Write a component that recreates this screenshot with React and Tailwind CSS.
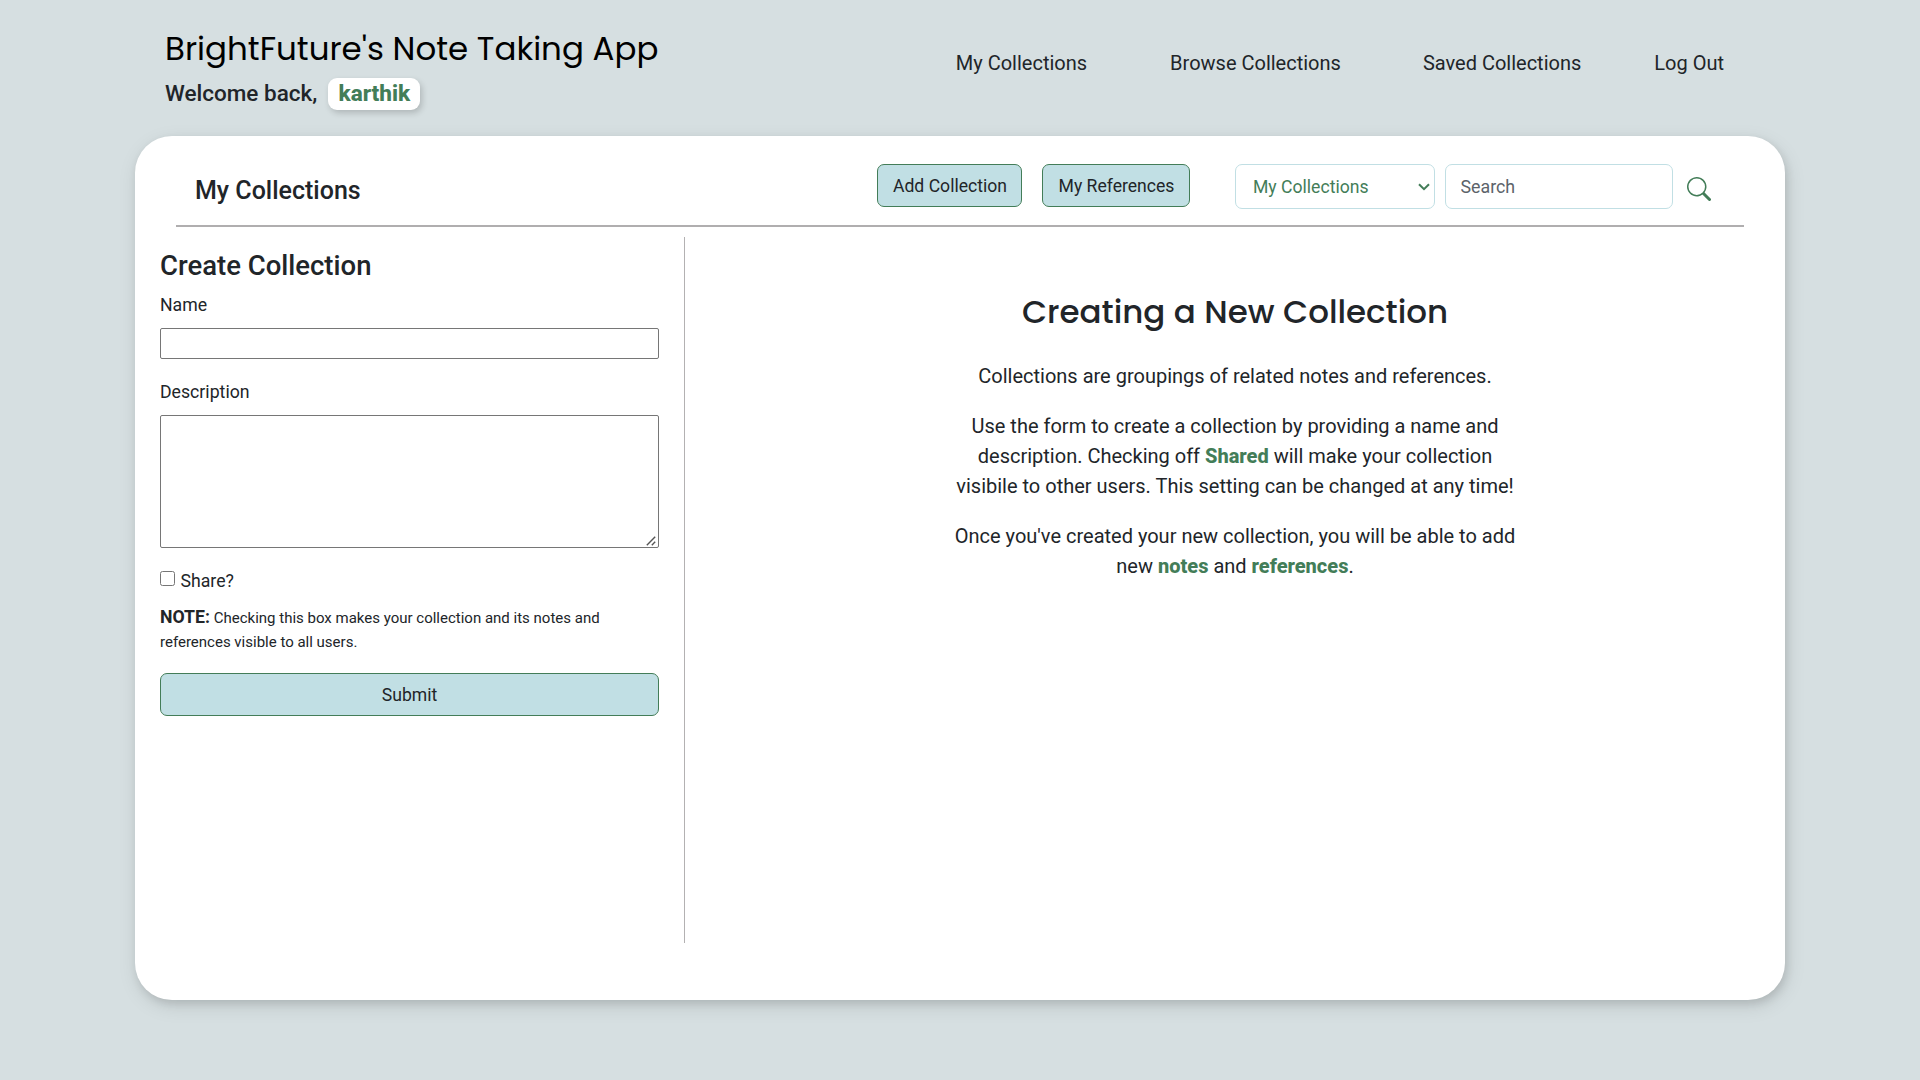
import { BsSearch } from 'react-icons/bs';

function Header() {
  return (
    <header className="flex h-[136px] items-start justify-between pl-[165px] pr-[196px]">
      <div className="pt-[29px]">
        <h1 className="font-['Poppins','Inter',sans-serif] text-[32.5px] leading-10 text-black">
          BrightFuture's Note Taking App
        </h1>
        <div className="mt-[9px] flex items-center text-[22.5px] leading-8">
          <span className="pb-0.5 font-medium leading-[30px]">Welcome back,</span>
          <span className="ml-[11px] flex h-8 w-[92px] items-center justify-center rounded-[9px] bg-white pb-0.5 font-extrabold text-[#437d58] shadow-[2px_3px_6px_rgba(0,0,0,0.18)]">
            karthik
          </span>
        </div>
      </div>
      <nav className="flex gap-[83px] pt-12 text-xl leading-[30px]">
        <a>My Collections</a>
        <a>Browse Collections</a>
        <a className="-ml-px">Saved Collections</a>
        <a className="-ml-2.5">Log Out</a>
      </nav>
    </header>
  );
}

function Toolbar() {
  return (
    <div className="mx-[41px] flex h-[91px] items-start border-b-2 border-[#b0aeaf] pl-[19px] pr-[33px] pt-7">
      <h2 className="mr-auto mt-2.5 text-[25px] font-medium leading-[34px]">My Collections</h2>
      <button className="h-[43px] w-[145px] rounded-[7px] border border-[#437d58] bg-[#c1dfe4] pl-px pt-0.5 text-[17.6px] leading-none">
        Add Collection
      </button>
      <button className="ml-5 h-[43px] w-[148px] rounded-[7px] border border-[#437d58] bg-[#c1dfe4] pl-px pt-0.5 text-[17.6px] leading-none">
        My References
      </button>
      <div className="relative ml-[45px]">
        <select className="block h-[45px] w-[200px] appearance-none rounded-[7px] border border-[#c1dfe4] bg-white pl-[17px] pt-0.5 text-[17.6px] text-[#437d58]">
          <option>My Collections</option>
        </select>
        <svg
          className="pointer-events-none absolute right-[4px] top-[18px] h-2.5 w-3.5 text-[#437d58]"
          viewBox="0 0 14 10"
          fill="none"
          stroke="currentColor"
          strokeWidth="2"
        >
          <path d="M2 2.2 7 7.2 12 2.2" />
        </svg>
      </div>
      <input
        placeholder="Search"
        className="ml-2.5 h-[45px] w-[228px] rounded-[7px] border border-[#c1dfe4] bg-white pl-[14.5px] text-[17.8px] placeholder:text-[#5c636a]"
      />
      <BsSearch className="ml-3.5 mt-[13px] size-6 text-[#437d58]" />
    </div>
  );
}

function CollectionForm() {
  return (
    <form className="flex w-[550px] flex-col border-r border-[#b3b1b2] px-[25px] pt-3 text-[17.7px] leading-[29px]">
      <h2 className="pb-2 text-[27.5px] font-medium leading-[34px]">Create Collection</h2>
      <label>Name</label>
      <input className="mt-2 h-[31px] w-full rounded-xs border border-[#767676]" />
      <label className="mt-[19px]">Description</label>
      <div className="relative mt-2 h-[133px]">
        <textarea className="block size-full resize-none rounded-xs border border-[#767676]" />
        <svg
          className="pointer-events-none absolute bottom-0.5 right-[3px] size-2.5 text-[#555]"
          viewBox="0 0 10 10"
          fill="none"
          stroke="currentColor"
          strokeWidth="1.4"
        >
          <path d="M0.8 9.2 9.2 0.8M5.8 9.2 9.2 5.8" />
        </svg>
      </div>
      <label className="mt-[19px] flex items-center gap-[5.5px]">
        <input type="checkbox" className="mb-1.5 size-[15px]" />
        Share?
      </label>
      <p className="mt-[9px] text-[15px] leading-6">
        <strong className="text-[17.7px] leading-6">NOTE:</strong> Checking this box makes your collection and its notes
        and references visible to all users.
      </p>
      <button
        type="button"
        className="mt-[19px] h-[43px] rounded-[7px] border border-[#437d58] bg-[#c1dfe4] pt-0.5 text-[17.6px] leading-none"
      >
        Submit
      </button>
    </form>
  );
}

function Term({ children }) {
  return <strong className="font-extrabold text-[#437d58]">{children}</strong>;
}

function Guide() {
  return (
    <section className="flex flex-1 flex-col items-center pt-[55px] text-center text-xl leading-[30px]">
      <h2 className="mb-[29px] font-['Poppins','Inter',sans-serif] text-[32.5px] font-medium leading-10">
        Creating a New Collection
      </h2>
      <div className="flex w-[566px] flex-col gap-5">
        <p>Collections are groupings of related notes and references.</p>
        <p>
          Use the form to create a collection by providing a name and description. Checking off <Term>Shared</Term> will
          make your collection visibile to other users. This setting can be changed at any time!
        </p>
        <p>
          Once you've created your new collection, you will be able to add new <Term>notes</Term> and{' '}
          <Term>references</Term>.
        </p>
      </div>
    </section>
  );
}

export default function App() {
  return (
    <div className="h-[1080px] bg-[#d6dfe1] font-['Roboto',sans-serif] text-[#212529]">
      <Header />
      <main className="mx-[135px] h-[864px] rounded-[37px] bg-white shadow-[2px_4px_8px_rgba(0,0,0,0.11),2px_6px_20px_rgba(0,0,0,0.1)]">
        <Toolbar />
        <div className="mt-2.5 flex h-[706px]">
          <CollectionForm />
          <Guide />
        </div>
      </main>
    </div>
  );
}
